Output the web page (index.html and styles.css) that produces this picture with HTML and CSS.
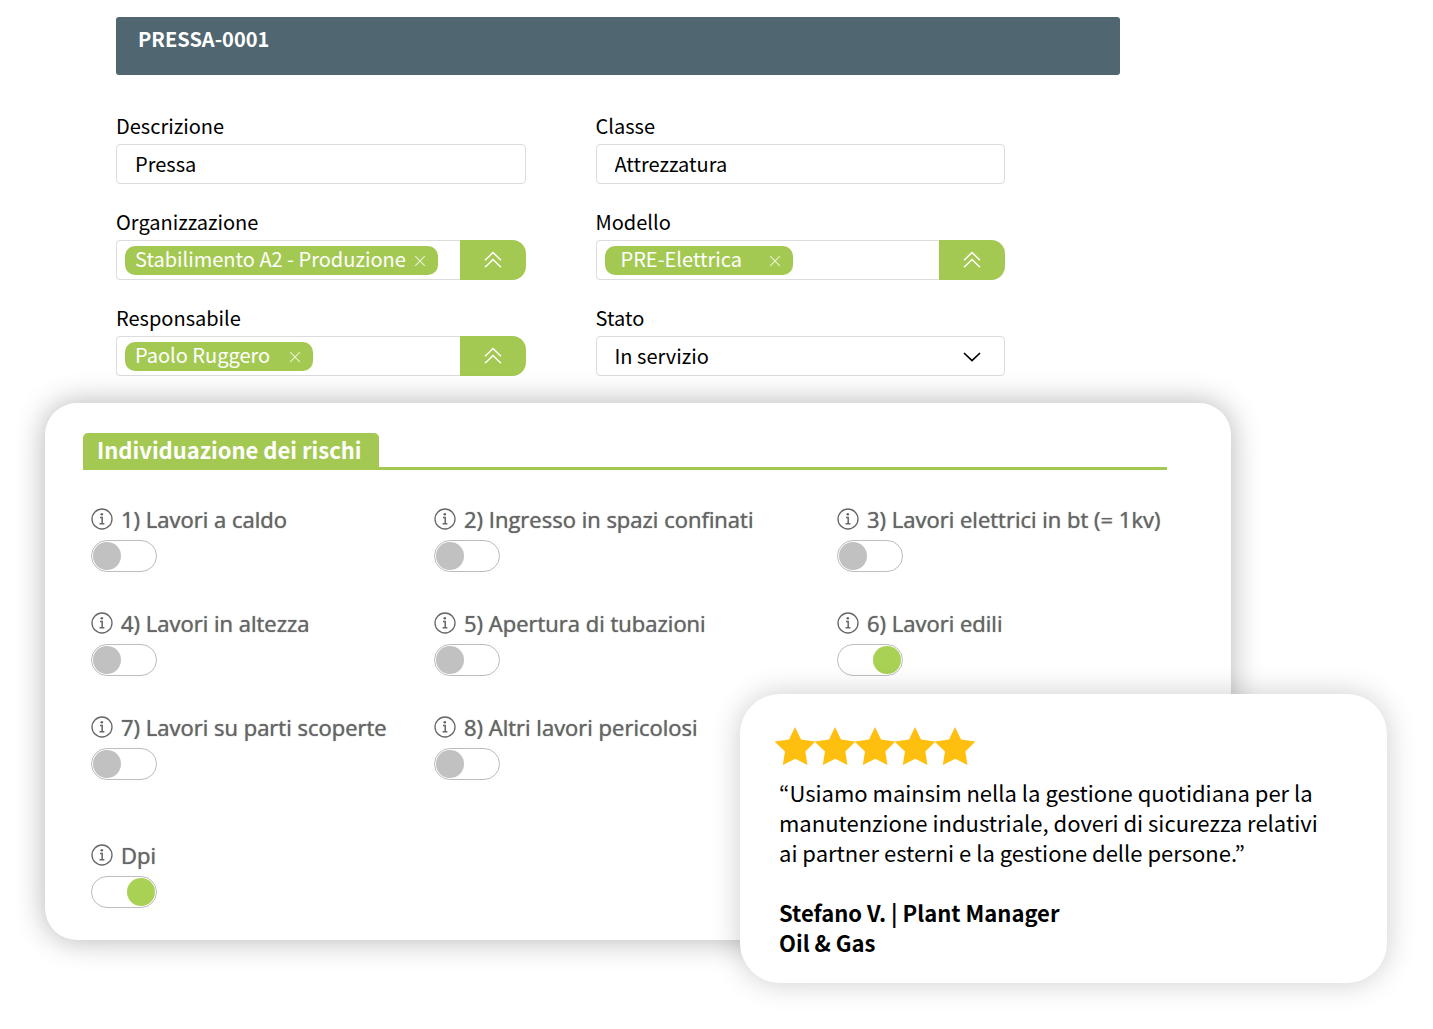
FILE: index.html
```html
<!DOCTYPE html>
<html lang="it">
<head>
    <meta charset="UTF-8">
    <title>PRESSA-0001</title>
    <link rel="stylesheet" href="styles.css">
</head>
<body>
<!-- shared icons -->
<svg class="sprite" aria-hidden="true">
    <symbol id="info" viewBox="0 0 22 22">
        <circle cx="11" cy="11" r="10" fill="none" stroke="currentColor" stroke-width="1.3"/>
        <circle cx="10.8" cy="6.2" r="1.3" fill="currentColor"/>
        <path d="M9 9.4h2.2v6.1M8.6 15.8h4.8" fill="none" stroke="currentColor" stroke-width="1.5"/>
    </symbol>
    <symbol id="close" viewBox="0 0 12 12">
        <path d="M1.2 1.2l9.6 9.6M10.8 1.2l-9.6 9.6" fill="none" stroke="currentColor" stroke-width="1.2"/>
    </symbol>
    <symbol id="up" viewBox="0 0 18 18">
        <path d="M1 9.2L9 1.5l8 7.7M1 16.2l8-7.7 8 7.7" fill="none" stroke="currentColor" stroke-width="1.5"/>
    </symbol>
    <symbol id="star" viewBox="0 0 40 38">
        <path d="M20 0L26 12.4L40.4 14.6L30.4 24.4L32.4 38L20.4 31.8L7.8 38L10 24.4L-.4 14.6L14 12.4z" fill="currentColor"/>
    </symbol>
</svg>

<main class="page">
    <section class="asset">
        <h1 class="asset-title">PRESSA-0001</h1>
        <form class="asset-form">
            <div class="field">
                <label for="descrizione">Descrizione</label>
                <input class="control" type="text" id="descrizione" value="Pressa">
            </div>
            <div class="field">
                <label for="classe">Classe</label>
                <input class="control" type="text" id="classe" value="Attrezzatura">
            </div>
            <div class="field">
                <label for="organizzazione">Organizzazione</label>
                <div class="picker">
                    <span class="tag">Stabilimento A2 - Produzione
                        <button type="button" class="tag-remove" aria-label="Rimuovi"><svg><use href="#close"/></svg></button>
                    </span>
                    <button type="button" class="picker-open" id="organizzazione"><svg><use href="#up"/></svg></button>
                </div>
            </div>
            <div class="field">
                <label for="modello">Modello</label>
                <div class="picker">
                    <span class="tag tag-model">PRE-Elettrica
                        <button type="button" class="tag-remove" aria-label="Rimuovi"><svg><use href="#close"/></svg></button>
                    </span>
                    <button type="button" class="picker-open" id="modello"><svg><use href="#up"/></svg></button>
                </div>
            </div>
            <div class="field">
                <label for="responsabile">Responsabile</label>
                <div class="picker">
                    <span class="tag">Paolo Ruggero
                        <button type="button" class="tag-remove" aria-label="Rimuovi"><svg><use href="#close"/></svg></button>
                    </span>
                    <button type="button" class="picker-open" id="responsabile"><svg><use href="#up"/></svg></button>
                </div>
            </div>
            <div class="field">
                <label for="stato">Stato</label>
                <div class="select">
                    <select class="control" id="stato">
                        <option>In servizio</option>
                    </select>
                    <svg class="select-arrow" viewBox="0 0 18 10"><path d="M1 1l8 7.5L17 1" fill="none" stroke="currentColor" stroke-width="1.7"/></svg>
                </div>
            </div>
        </form>
    </section>

    <div class="overlap">
        <section class="risks">
            <div class="risks-head"><h2>Individuazione dei rischi</h2></div>
            <div class="risks-grid">
                <div class="risk">
                    <label for="r1"><svg><use href="#info"/></svg>1) Lavori a caldo</label>
                    <input class="toggle" type="checkbox" id="r1">
                </div>
                <div class="risk">
                    <label for="r2"><svg><use href="#info"/></svg>2) Ingresso in spazi confinati</label>
                    <input class="toggle" type="checkbox" id="r2">
                </div>
                <div class="risk">
                    <label for="r3"><svg><use href="#info"/></svg>3) Lavori elettrici in bt (= 1kv)</label>
                    <input class="toggle" type="checkbox" id="r3">
                </div>
                <div class="risk">
                    <label for="r4"><svg><use href="#info"/></svg>4) Lavori in altezza</label>
                    <input class="toggle" type="checkbox" id="r4">
                </div>
                <div class="risk">
                    <label for="r5"><svg><use href="#info"/></svg>5) Apertura di tubazioni</label>
                    <input class="toggle" type="checkbox" id="r5">
                </div>
                <div class="risk">
                    <label for="r6"><svg><use href="#info"/></svg>6) Lavori edili</label>
                    <input class="toggle" type="checkbox" id="r6" checked>
                </div>
                <div class="risk">
                    <label for="r7"><svg><use href="#info"/></svg>7) Lavori su parti scoperte</label>
                    <input class="toggle" type="checkbox" id="r7">
                </div>
                <div class="risk">
                    <label for="r8"><svg><use href="#info"/></svg>8) Altri lavori pericolosi</label>
                    <input class="toggle" type="checkbox" id="r8">
                </div>
                <div class="risk risk-dpi">
                    <label for="dpi"><svg><use href="#info"/></svg>Dpi</label>
                    <input class="toggle" type="checkbox" id="dpi" checked>
                </div>
            </div>
        </section>

        <figure class="review">
            <div class="stars" role="img" aria-label="5 su 5">
                <svg><use href="#star"/></svg>
                <svg><use href="#star"/></svg>
                <svg><use href="#star"/></svg>
                <svg><use href="#star"/></svg>
                <svg><use href="#star"/></svg>
            </div>
            <blockquote>“Usiamo mainsim nella la gestione quotidiana per la manutenzione industriale, doveri di sicurezza relativi ai partner esterni e la gestione delle persone.”</blockquote>
            <figcaption>Stefano V. | Plant Manager<br>Oil &amp; Gas</figcaption>
        </figure>
    </div>
</main>
</body>
</html>
```

FILE: styles.css
```css
*{
    box-sizing: border-box;
}
body{
    margin: 0;
    background-color: #fff;
    color: #000;
    font-family: "Noto Sans CJK KR", "Noto Sans", sans-serif;
    font-size: 20px;
}
h1, h2, figure, blockquote{
    margin: 0;
}
button, input, select{
    font: inherit;
    color: inherit;
}
button{
    border: none;
    padding: 0;
    background: none;
    cursor: pointer;
}
.sprite{
    display: none;
}
.page{
    min-height: 100vh;
    padding: 17px 46px 46px 45px;
}

/* asset form */
.asset{
    margin: 0 267px 0 71px;
}
.asset-title{
    height: 58px;
    padding: 8px 22px;
    border-radius: 3px;
    background-color: #506670;
    color: #fff;
    font-size: 20px;
    font-weight: 700;
    line-height: 28px;
}
.asset-form{
    display: grid;
    grid-template-columns: 1fr 1fr;
    gap: 22px 70px;
    margin: 35px 115px 0 0;
}
.field label{
    display: block;
    height: 34px;
    line-height: 32px;
}
.control{
    display: block;
    width: 100%;
    height: 40px;
    padding: 0 18px 2px;
    border: 1px solid #dcdcdc;
    border-radius: 4px;
    background-color: transparent;
    appearance: none;
}
.select{
    position: relative;
}
.select-arrow{
    position: absolute;
    right: 24px;
    top: 16px;
    width: 18px;
    height: 10px;
    pointer-events: none;
}
.picker{
    display: flex;
    align-items: center;
    justify-content: space-between;
    height: 40px;
    padding-left: 8px;
    border: 1px solid #dcdcdc;
    border-right: none;
    border-radius: 4px 14px 14px 4px;
}
.tag{
    display: flex;
    align-items: center;
    justify-content: space-between;
    gap: 8px;
    min-width: 188px;
    height: 29px;
    padding: 0 12px 4px 10px;
    border-radius: 10px;
    background-color: #a4c953;
    color: #fff;
    line-height: 25px;
}
.tag-model{
    padding-left: 16px;
}
.tag-remove{
    display: flex;
    padding-top: 5px;
    color: #e6f0cf;
}
.tag-remove svg{
    width: 12px;
    height: 12px;
}
.picker-open{
    display: flex;
    align-items: center;
    justify-content: center;
    width: 66px;
    height: 40px;
    border-radius: 0 14px 14px 0;
    background-color: #a4c953;
    color: #fff;
}
.picker-open svg{
    width: 18px;
    height: 18px;
}

/* risk card, the review lies over its corner */
.overlap{
    position: relative;
    margin-top: 27px;
}
.risks{
    margin-right: 156px;
    padding: 30px 64px 32px 38px;
    border-radius: 32px;
    background-color: #fff;
    box-shadow: 0 0 30px rgba(0, 0, 0, .3);
}
.risks-head{
    border-bottom: 3px solid #a4c953;
}
.risks-head h2{
    width: fit-content;
    height: 34px;
    padding: 0 17px 0 14px;
    border-radius: 5px 5px 0 0;
    background-color: #a4c953;
    color: #fff;
    font-size: 22px;
    font-weight: 700;
    line-height: 32px;
}
.risks-grid{
    display: grid;
    grid-template-columns: 343fr 403fr 330fr;
    row-gap: 36px;
    padding: 34px 0 0 8px;
}
.risk{
    white-space: nowrap;
}
.risk label{
    display: flex;
    align-items: center;
    gap: 8px;
    height: 30px;
    color: #666;
    font-family: "Open Sans", sans-serif;
    font-size: 22px;
    text-shadow: 0 0 1px #666;
}
.risk label svg{
    width: 22px;
    height: 22px;
}
.risk-dpi{
    grid-column: 1;
    margin-top: 24px;
}
.toggle{
    display: flex;
    align-items: center;
    width: 66px;
    height: 32px;
    margin: 6px 0 0;
    padding: 0 1px;
    border: 1px solid #bdbdbd;
    border-radius: 16px;
    background-color: #fff;
    appearance: none;
}
.toggle::before{
    content: "";
    width: 28px;
    height: 28px;
    border-radius: 50%;
    background-color: #c1c1c1;
}
.toggle:checked{
    justify-content: flex-end;
    background-color: transparent;
}
.toggle:checked::before{
    background-color: #a9d154;
}

/* review */
.review{
    position: absolute;
    right: 0;
    top: 291px;
    width: 647px;
    padding: 33px 60px 26px 39px;
    border-radius: 40px;
    background-color: #fff;
    box-shadow: 0 0 30px rgba(0, 0, 0, .2);
    font-size: 22px;
    line-height: 30px;
}
.stars{
    display: flex;
    margin-left: -4px;
    color: #ffbf0f;
}
.stars svg{
    width: 40px;
    height: 38px;
    overflow: visible;
}
.review blockquote{
    margin-top: 12px;
}
.review figcaption{
    margin-top: 30px;
    font-weight: 700;
}
```
